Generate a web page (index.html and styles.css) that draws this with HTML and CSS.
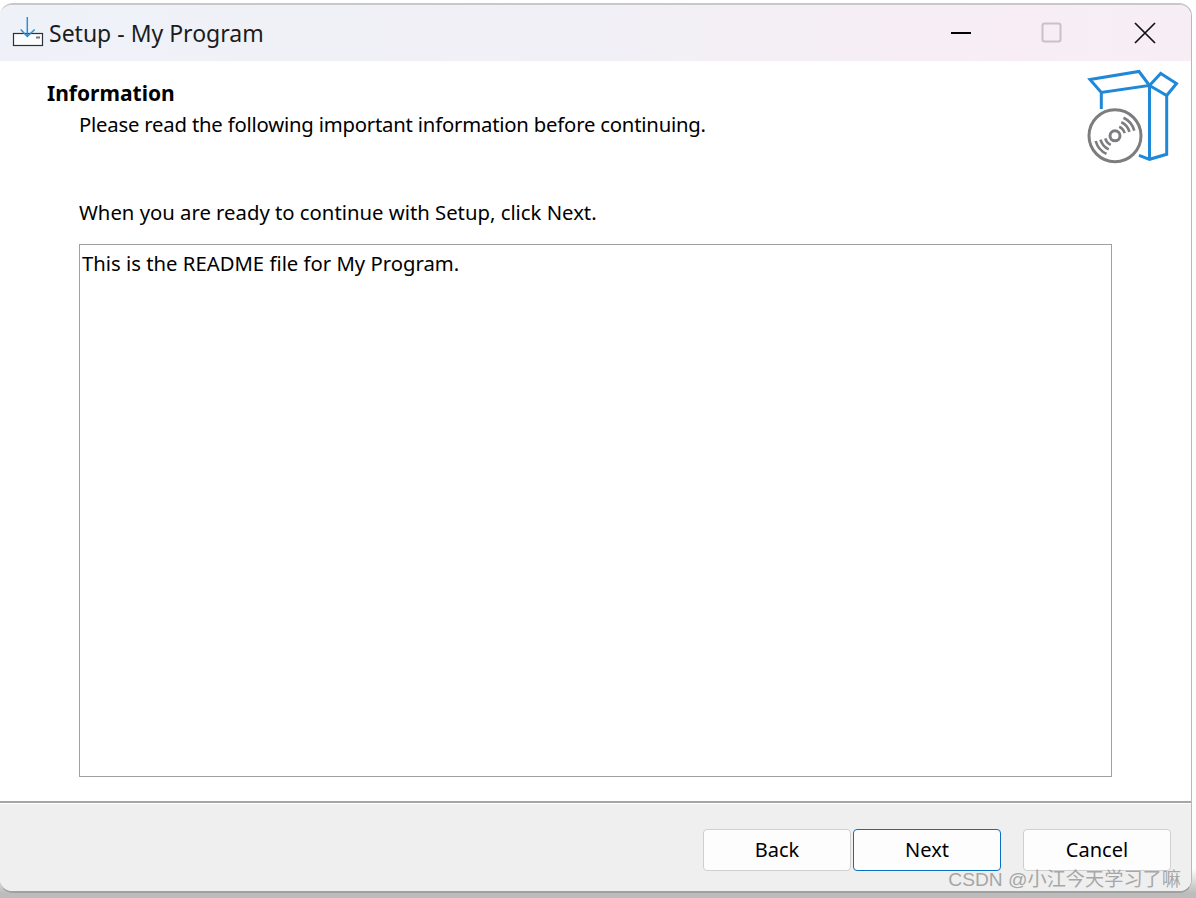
FILE: index.html
```html
<!DOCTYPE html>
<html lang="en">
<head>
<meta charset="utf-8">
<title>Setup - My Program</title>
<link rel="stylesheet" href="styles.css">
</head>
<body>
<div class="window">
  <header class="titlebar">
    <svg class="app-icon" width="32" height="32" viewBox="0 0 32 32">
      <rect class="ink" x="1.5" y="16.5" width="29" height="12"/>
      <path class="dash" d="M24 20.5H28"/>
      <path class="blue" d="M15.3 0V20M8.7 12.5L15.3 19.5L22.7 12.5"/>
    </svg>
    <span class="title">Setup - My Program</span>
    <div class="controls">
      <svg class="ctl ctl-min" width="22" height="22" viewBox="0 0 22 22"><path class="c-line" d="M1 11H21"/></svg>
      <svg class="ctl" width="22" height="22" viewBox="0 0 22 22"><rect class="c-max" x="2.5" y="1.5" width="18" height="18" rx="2"/></svg>
      <svg class="ctl" width="22" height="22" viewBox="0 0 22 22"><path class="c-x" d="M1 1L21 21M21 1L1 21"/></svg>
    </div>
  </header>
  <main class="content">
    <div class="head">
      <div class="head-text">
        <h1 class="heading">Information</h1>
        <p class="subheading">Please read the following important information before continuing.</p>
      </div>
      <svg class="box-icon" width="94" height="98" viewBox="0 0 94 98">
        <path class="box" d="M4 10.5L53 2.5L63.5 16.5L15.3 23.5ZM63.5 16.5L74.7 4.5L90.5 14.5L80.7 26.5ZM15.3 23.5V40M63.5 16.5V90.3M80.7 26.5V85.3L63.5 90.3L53 86.3"/>
        <g transform="translate(29 66.8)">
          <circle class="disc" r="26"/>
          <circle class="disc" r="5"/>
          <path class="arcs" d="M4.2 -9.1A10 10 0 0 1 9.7 -2.6M6.3 -13.6A15 15 0 0 1 14.5 -3.9M8.5 -18.1A20 20 0 0 1 19.3 -5.2M-4.2 9.1A10 10 0 0 1 -9.7 2.6M-6.3 13.6A15 15 0 0 1 -14.5 3.9M-8.5 18.1A20 20 0 0 1 -19.3 5.2"/>
        </g>
      </svg>
    </div>
    <p class="prompt">When you are ready to continue with Setup, click Next.</p>
    <div class="readme">This is the README file for My Program.</div>
  </main>
  <footer class="footer">
    <button class="btn">Back</button>
    <button class="btn primary">Next</button>
    <button class="btn cancel">Cancel</button>
  </footer>
  <span class="watermark">CSDN @小江今天学习了嘛</span>
</div>
</body>
</html>
```

FILE: styles.css
```css
* { box-sizing: border-box; }
html, body { margin: 0; height: 100%; }
body {
  width: 1196px;
  height: 898px;
  overflow: hidden;
  padding: 3px 4px 5px 0;
  background: linear-gradient(#fff 0, #fff 868px, #bcbcbc 893px);
  font-family: "Noto Sans", "Noto Sans CJK SC", sans-serif;
  color: #000;
}
.window {
  position: relative;
  height: 890px;
  display: flex;
  flex-direction: column;
  background: #fff;
  border-radius: 13px;
  border-top: 2px solid #c8c8c8;
  border-right: 1px solid #b8b8b8;
  border-bottom: 2px solid #a0a0a0;
  overflow: hidden;
}
.titlebar {
  flex: none;
  height: 56px;
  display: flex;
  align-items: center;
  padding-left: 12px;
  background: linear-gradient(90deg, #eef2f8 0%, #f1f0f6 50%, #f8edf4 85%, #f7eef5 100%);
}
.app-icon { flex: none; margin-right: 5px; }
.ink { fill: #fbfcfe; stroke: #2a3238; stroke-width: 1.2; }
.dash { fill: none; stroke: #777; stroke-width: 2; }
.blue { fill: none; stroke: #2b8fd6; stroke-width: 1.5; }
.title { font-size: 23px; color: #1c1c1c; }
.controls {
  margin-left: auto;
  display: flex;
  align-items: center;
  gap: 72px;
  padding-right: 35px;
}
.ctl { flex: none; }
.ctl-min { margin-right: -4px; }
.c-line { stroke: #000; stroke-width: 2; fill: none; }
.c-max { stroke: #c6c2c8; stroke-width: 2; fill: none; }
.c-x { stroke: #111; stroke-width: 1.7; fill: none; }
.content {
  flex: 1;
  display: flex;
  flex-direction: column;
  padding: 0 79px;
}
.head {
  position: relative;
  height: 100px;
}
.heading {
  margin: 17px 0 0 -32px;
  font-size: 21px;
  line-height: 30px;
  font-weight: 700;
}
.subheading {
  margin: 0;
  font-size: 20.3px;
  line-height: 32px;
  letter-spacing: -0.2px;
}
.box-icon {
  position: absolute;
  top: 8px;
  right: -68px;
}
.box { fill: none; stroke: #1f88d8; stroke-width: 3; }
.disc { fill: #fff; stroke: #7d7d80; stroke-width: 3; }
.arcs { fill: none; stroke: #7d7d80; stroke-width: 2.6; }
.prompt { margin: 35px 0 16px; font-size: 20.3px; line-height: 32px; }
.readme {
  height: 533px;
  padding: 2px;
  border: 1px solid #a0a0a0;
  font-size: 20.3px;
  line-height: 32px;
  background: #fff;
}
.footer {
  flex: none;
  height: 90px;
  display: flex;
  align-items: flex-start;
  padding: 26px 20px 0 703px;
  background: #efefef;
  border-top: 2px solid #a6a6a6;
  box-shadow: inset 0 1px 0 #fff;
}
.btn {
  flex: none;
  width: 148px;
  height: 42px;
  padding: 0 0 2px;
  border: 1px solid #cfcfcf;
  border-radius: 4px;
  background: #fdfdfd;
  font: 20px "Noto Sans", sans-serif;
  color: #000;
}
.primary { margin-left: 2px; border-color: #0a6fc2; }
.cancel { margin-left: 22px; }
.watermark {
  position: absolute;
  right: 10px;
  bottom: -1px;
  font-family: "Liberation Sans", "Noto Sans CJK SC", sans-serif;
  font-size: 19.2px;
  line-height: 24px;
  color: #9a9a9a;
  opacity: .85;
}
```
